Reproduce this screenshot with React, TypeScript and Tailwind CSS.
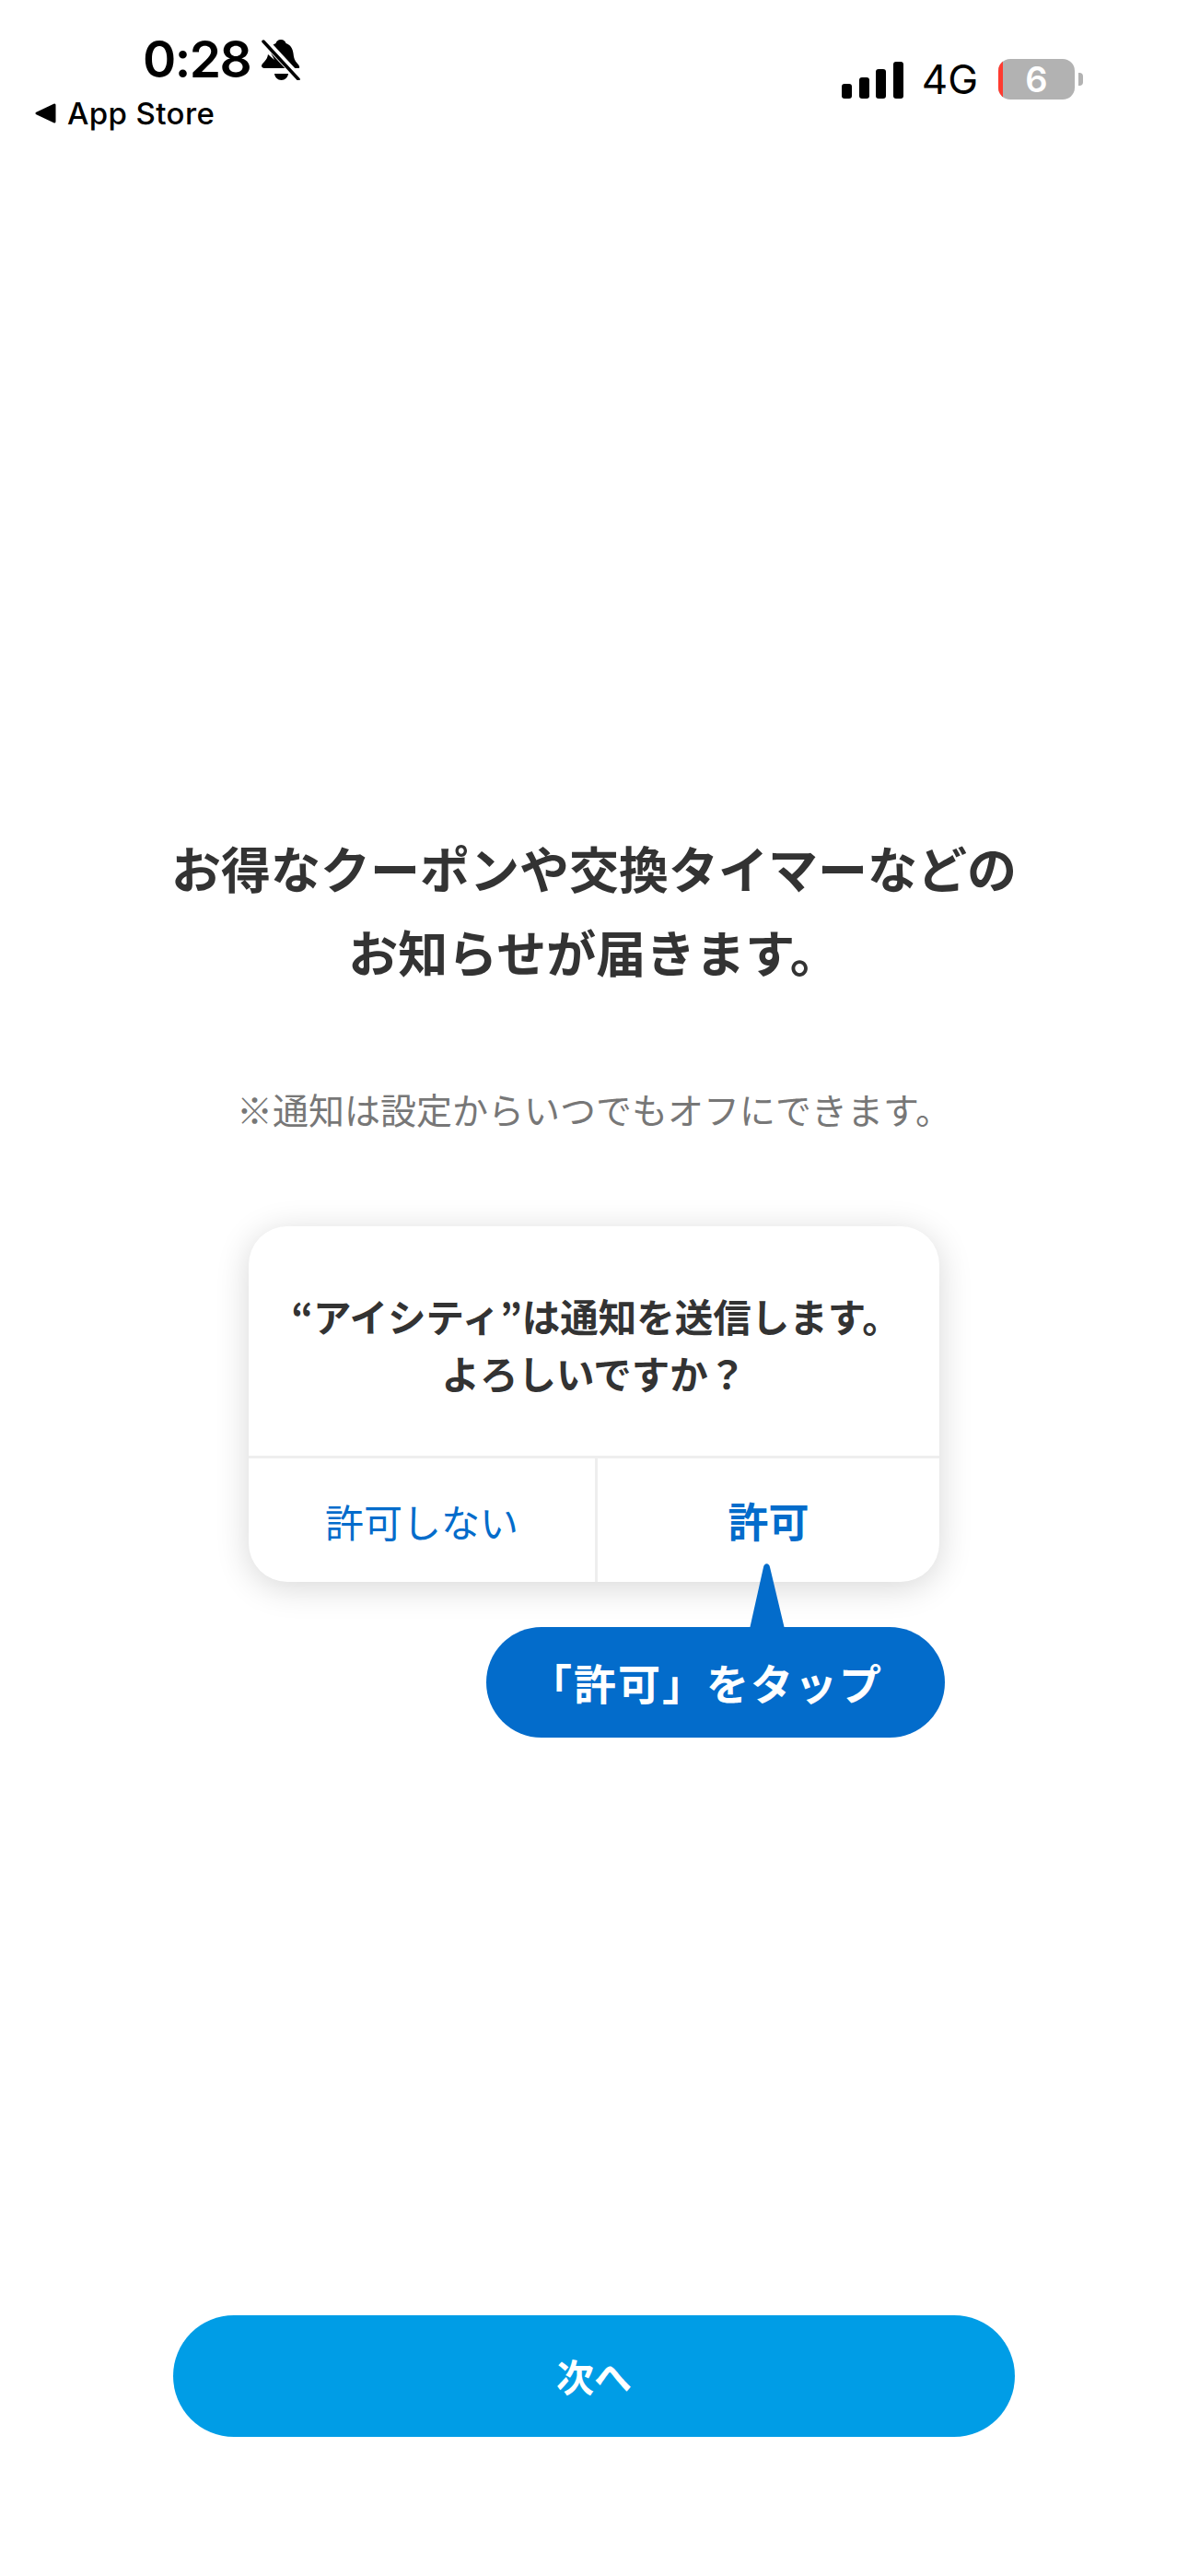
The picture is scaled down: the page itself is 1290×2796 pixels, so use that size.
import React from "react";

const jp = "font-['Noto_Sans_CJK_JP','Inter',sans-serif]";

function BellOff() {
    return (
        <svg width="42" height="44" viewBox="0 0 42 44" className="ml-[12px] mt-[1px] shrink-0">
            {/* bell body */}
            <path
                d="M21 0c3 0 5 2 5.500 4 5 1.500 7.500 6 8 11 .5 5 1.500 8 4.500 11 2 2 2.500 3.500 2 5H8L3 31c-1.500 0-3-1-3-2.500 0-1.500 1.500-3 3-4.500 2.500-2.500 3.500-5 4-8L14 22 7.500 9.500C10 7 13 5 15.500 4 16 2 18 0 21 0z"
                fill="#000"
            />
            <path d="M14 37h15c-.5 4-3.500 7-7.500 7S14.500 41 14 37z" fill="#000" />
            <path d="M3 1l38 41" stroke="#fff" strokeWidth="8" fill="none" />
            <path d="M2 2l38 41" stroke="#000" strokeWidth="3.500" strokeLinecap="round" fill="none" />
        </svg>
    );
}

function StatusBar() {
    return (
        <div className="flex justify-between items-start h-[170px] font-['Inter',sans-serif] text-black">
            <div className="pl-[38px] pt-[38px]">
                <div className="flex items-center pl-[117px] h-[52px]">
                    <span className="text-[55px] leading-[52px] font-semibold tracking-[-1.500px]">0:28</span>
                    <BellOff />
                </div>
                <div className="flex items-center mt-[18px] h-[30px]">
                    <svg width="23" height="22" viewBox="0 0 23 22" className="shrink-0">
                        <path d="M21 2v18L2 11z" fill="#000" stroke="#000" strokeWidth="3" strokeLinejoin="round" />
                    </svg>
                    <span className="ml-[12px] text-[33px] leading-[30px] font-medium tracking-[0.4px]">App Store</span>
                </div>
            </div>
            <div className="flex items-center pt-[64px] pr-[114px]">
                <div className="flex items-end gap-[7.500px] h-[42px] mr-[20px]">
                    <div className="w-[11px] h-[16px] rounded-[3px] bg-black" />
                    <div className="w-[11px] h-[23px] rounded-[3px] bg-black" />
                    <div className="w-[11px] h-[32px] rounded-[3px] bg-black" />
                    <div className="w-[11px] h-[40px] rounded-[3px] bg-black" />
                </div>
                <span className="text-[44px] leading-[44px] mr-[22px]">4G</span>
                <div className="relative w-[83px] h-[44px] rounded-[13px] overflow-hidden bg-[#b2b2b2] flex items-center justify-center">
                    <div className="absolute left-0 top-0 bottom-0 w-[5px] bg-[#ff3b30]" />
                    <span className="text-[38px] leading-[44px] font-semibold text-white">6</span>
                </div>
                <div className="ml-[4px] w-[5px] h-[14px] rounded-r-[4px] bg-[#b2b2b2]" />
            </div>
        </div>
    );
}

export default function App() {
    return (
        <div className={`w-[1290px] h-[2796px] bg-white flex flex-col overflow-hidden ${jp}`}>
            <StatusBar />

            {/* Heading */}
            <div className="mt-[726px] text-center text-[54px] leading-[91px] font-bold text-[#333333]">
                <p>お得なクーポンや交換タイマーなどの</p>
                <p>お知らせが届きます。</p>
            </div>

            <p className="mt-[97px] text-center text-[39px] leading-[56px] text-[#777777]">
                ※通知は設定からいつでもオフにできます。
            </p>

            {/* Permission dialog */}
            <div className="mt-[100px] ml-[270px] w-[750px] h-[386px] rounded-[42px] bg-white shadow-[0_6px_36px_rgba(0,0,0,0.16)] flex flex-col overflow-hidden">
                <div className="h-[252px] pt-[6px] flex flex-col items-center justify-center text-[41.500px] leading-[62px] font-bold text-[#333333] border-b-[3px] border-[#eeeeee]">
                    <p className="pl-[4px]">“アイシティ”は通知を送信します。</p>
                    <p>よろしいですか？</p>
                </div>
                <div className="flex flex-1 text-[#036ccb]">
                    <div className="w-[379px] flex items-center justify-center text-[42px] border-r-[3px] border-[#eeeeee]">許可しない</div>
                    <div className="flex-1 flex items-center justify-center text-[44px] font-bold">許可</div>
                </div>
            </div>

            {/* Tap hint */}
            <div className="relative mt-[49px] ml-[528px] w-[498px] h-[120px] rounded-[60px] bg-[#036ccb] flex items-center justify-center pr-[20px] pb-[2px] text-[46px] font-bold text-white tracking-[2px]">
                <svg width="40" height="72" viewBox="0 0 40 72" className="absolute left-[285px] top-[-70px]">
                    <path d="M1 72L16 5c1-5 6-5 7 0l16 67z" fill="#036ccb" />
                </svg>
                「許可」をタップ
            </div>

            {/* Next button */}
            <div className="mt-[627px] ml-[188px] w-[914px] h-[132px] rounded-[66px] bg-[#009de6] flex items-center justify-center text-[41px] font-bold text-white">
                次へ
            </div>
        </div>
    );
}
